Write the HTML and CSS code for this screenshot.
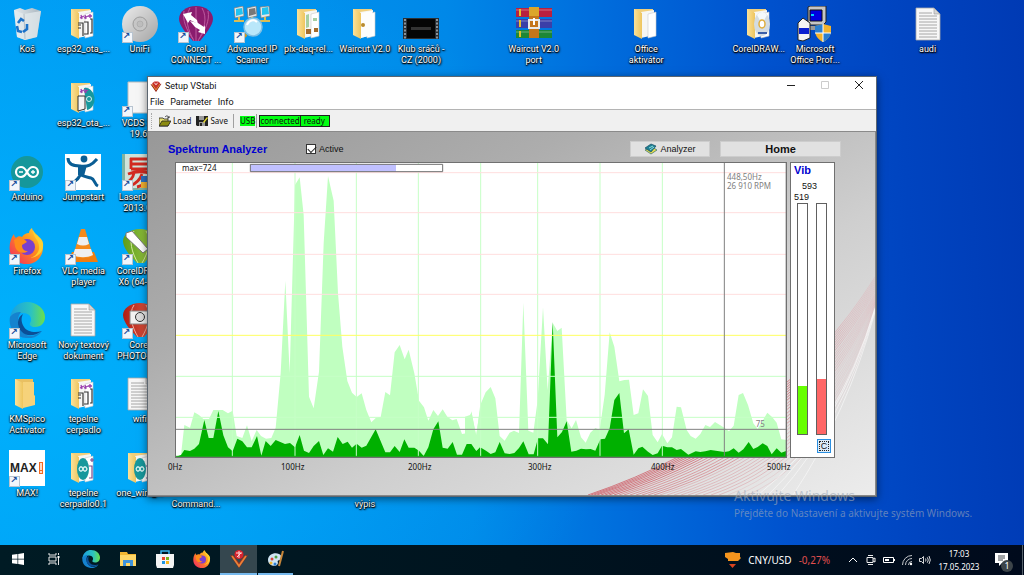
FILE: index.html
```html
<!DOCTYPE html>
<html lang="cs">
<head>
<meta charset="utf-8">
<title>Setup VStabi</title>
<link rel="stylesheet" href="styles.css">
</head>
<body>
<svg class="sprite" aria-hidden="true">
  <defs>
    <linearGradient id="g-folder" x1="0" x2="1"><stop offset="0" stop-color="#fbe29a"/><stop offset="1" stop-color="#eec55e"/></linearGradient>
    <linearGradient id="g-disc" x1="0" y1="0" x2="1" y2="1"><stop offset="0" stop-color="#ececec"/><stop offset="1" stop-color="#a4a4a4"/></linearGradient>
    <linearGradient id="g-edge" x1="0" x2="1"><stop offset="0" stop-color="#1a9fe0"/><stop offset=".6" stop-color="#2cc3c0"/><stop offset="1" stop-color="#6be04a"/></linearGradient>
    <linearGradient id="g-fox" x1="1" y1="0" x2="0" y2="1"><stop offset="0" stop-color="#ffe23a"/><stop offset=".45" stop-color="#ff8a1c"/><stop offset="1" stop-color="#f0206a"/></linearGradient>
    <linearGradient id="g-green" x1="0" x2="1"><stop offset="0" stop-color="#5d9c1c"/><stop offset="1" stop-color="#a6d04a"/></linearGradient>
    <linearGradient id="g-red" x1="0" x2="1"><stop offset="0" stop-color="#b01c14"/><stop offset="1" stop-color="#e8664c"/></linearGradient>
    <linearGradient id="g-bin" x1="0" x2="1"><stop offset="0" stop-color="#e4eaee"/><stop offset="1" stop-color="#aab6bf"/></linearGradient>
    <linearGradient id="g-wave" gradientUnits="userSpaceOnUse" x1="440" y1="0" x2="727" y2="0"><stop offset="0" stop-color="#c8323f"/><stop offset=".75" stop-color="#d04a58"/><stop offset=".9" stop-color="#e48a94" stop-opacity=".55"/><stop offset="1" stop-color="#e8a0a8" stop-opacity=".4"/></linearGradient>
  </defs>
  <symbol id="i-folder" viewBox="0 0 36 36"><path d="M6 3h18v16l2 1v9H11L6 26z" fill="#e9c062"/><path d="M6 3l8 4v26l-8-4z" fill="url(#g-folder)"/><path d="M14 6h11v13l1 1v9l-12 3z" fill="#f6d27a"/></symbol>
  <symbol id="i-papers" viewBox="0 0 36 36"><path d="M6 3h19v26H11L6 26z" fill="#f1cf7b"/><path d="M13 6l13-2v25l-13 3z" fill="#f6f6f4"/><path d="M20 8l8-2v24l-8 2z" fill="#fff" stroke="#c9c9c9" stroke-width=".6"/><path d="M6 3l8 4v26l-8-4z" fill="url(#g-folder)"/></symbol>
  <symbol id="i-code" viewBox="0 0 36 36"><use href="#i-papers"/><path d="M13 17h5v13M19 16h4v12h-4M25 13h2v14h-2M13 19h3M13 22h3" fill="none" stroke="#353535" stroke-width="1.200"/><path d="M16 9l1 4M15 12l4-2M20 9l1 4M19 12l4-2M25 8v4M23 10h4" fill="none" stroke="#9b3fae" stroke-width="1.300"/></symbol>
  <symbol id="i-folderino" viewBox="0 0 36 36"><use href="#i-papers"/><ellipse cx="18" cy="19" rx="6" ry="11" fill="#17989c"/><path d="M14 19c1-3 3-3 4 0s3 3 4 0c-1-3-3-3-4 0s-3 3-4 0" fill="none" stroke="#d9f3f2" stroke-width="1.300"/><path d="M24 16h3v12h-3M25 10h4M27 8v4" fill="none" stroke="#7b4a8e" stroke-width="1.200"/></symbol>
  <symbol id="i-foldercirc" viewBox="0 0 36 36"><use href="#i-papers"/><path d="M19 8a9 11 0 0 1 3 22z" fill="#17989c"/><circle cx="24" cy="19" r="2.500" fill="none" stroke="#d9f3f2"/><path d="M13 16h7v13l-7 2z" fill="#f5f5f5" stroke="#333"/><path d="M16 9l1 4M15 12l4-2M20 9l1 4M19 12l4-2" fill="none" stroke="#9b3fae" stroke-width="1.300"/></symbol>
  <symbol id="i-bin" viewBox="0 0 36 36"><path d="M5 4l6-2 5 2 7-2 9 3-4 26-12 3-8-3z" fill="url(#g-bin)"/><path d="M5 4l10 4 17-3-4 26-12 3-8-3z" fill="#e6ecf0" opacity=".7"/><path d="M15 8l1 25" stroke="#b4bec6"/><path d="M9 17l3-4 3 2M8 20l1 5 4 1M18 18v5l-4 3" fill="none" stroke="#1b72c9" stroke-width="2.600"/></symbol>
  <symbol id="i-disc" viewBox="0 0 36 36"><circle cx="18" cy="18" r="18" fill="url(#g-disc)"/><circle cx="18" cy="18" r="7" fill="#c6c6c6" stroke="#9c9c9c"/><circle cx="18" cy="18" r="3" fill="#bdbdbd" stroke="#a5a5a5" stroke-width=".6"/></symbol>
  <symbol id="i-connect" viewBox="0 0 36 36"><path d="M18 0c10 0 17 6 17 13 0 6-8 16-13 22h-7C9 29 1 19 1 13 1 6 8 0 18 0z" fill="#8a1c6e"/><path d="M12 2C6 12 10 24 16 35M18 1v34M24 2c6 10 2 22-4 33M6 5c-2 9 3 20 9 28M30 5c2 9-3 20-9 28" fill="none" stroke="#bd5a9f"/><path d="M5 8l9-2-1 3 6 5 1 4-8-4-2 3z" fill="#fff"/><path d="M12 15l8 2 6 4 1-2 0 9-7-2 2-2-5-3z" fill="#fff"/></symbol>
  <symbol id="i-ip" viewBox="0 0 36 36"><g fill="#e2e6e8" stroke="#777" stroke-width=".7"><path d="M0 2l9-2 1 10-9 2zM13 2l9-2 1 10-9 2zM26 1l9-1 1 10-9 2z"/></g><path d="M2 3l6-1 1 6-7 2zM28 2l6-1 1 7-7 1z" fill="#22c3f0"/><path d="M15 3l6-1 1 6-7 2z" fill="#777"/><path d="M0 15h10M13 15h10M26 15h10M5 11v4M18 11v4M31 11v4" stroke="#d9bc55" stroke-width="2"/><path d="M12 28l-6 6" stroke="#d19a1e" stroke-width="4"/><circle cx="19" cy="21" r="9" fill="#b9e7fa" stroke="#7fc0e4" stroke-width="1.500"/><path d="M13 19c2-5 7-6 10-3" stroke="#fff" stroke-width="2" fill="none"/></symbol>
  <symbol id="i-daq" viewBox="0 0 36 36"><use href="#i-papers"/><path d="M15 9l3-1v13l-3 1zM22 12h4v3h-4z" fill="#a6cfa2"/><path d="M15 23h5v5h-5zM23 22h4v4h-4z" fill="#a26b2d"/></symbol>
  <symbol id="i-air" viewBox="0 0 36 36"><use href="#i-papers"/><path d="M14 7l11-2v24l-11 3z" fill="#fdfdfd"/><circle cx="16" cy="19" r="2" fill="#b98b2f"/></symbol>
  <symbol id="i-video" viewBox="0 0 36 36"><path d="M0 12h36v21H0z" fill="#2b3035"/><path d="M4 13h28v19H4z" fill="#050505"/><path d="M2 13v20M34 13v20" stroke="#8b949c" stroke-width="2" stroke-dasharray="2 1.500"/><path d="M8 21h20v3H8z" fill="#333"/></symbol>
  <symbol id="i-rar" viewBox="0 0 36 36"><path d="M0 2h36v9H0z" fill="#b9203f"/><path d="M0 13h36v9H0z" fill="#3b3fa8"/><path d="M0 24h36v8H0z" fill="#1d8735"/><path d="M0 4h36M0 15h36M0 26h36" stroke="#fff" opacity=".35"/><path d="M4 3v7M4 14v7M4 25v6" stroke="#e6c02a" stroke-width="2"/><path d="M13 1h10v31H13z" fill="#c4761c"/><path d="M13 1h10v9H13z" fill="#dba62b"/><path d="M13 14h10v8H13z" fill="none" stroke="#e9e9e9" stroke-width="2"/><path d="M18 12v7" stroke="#fff" stroke-width="2"/></symbol>
  <symbol id="i-cd" viewBox="0 0 36 36"><use href="#i-papers"/><ellipse cx="21" cy="18" rx="8" ry="12" fill="#d3dce2"/><path d="M21 18l-5-9c3-4 7-4 10 0z" fill="#f5fafc"/><ellipse cx="21" cy="18" rx="3" ry="4" fill="#fff" stroke="#e0ae3c" stroke-width="1.500"/><path d="M17 27h9" stroke="#3b5fa8" stroke-width="2"/></symbol>
  <symbol id="i-setup" viewBox="0 0 36 36"><path d="M11 1l2-1h16v16l-3 3H11z" fill="#c6c6c6" stroke="#222"/><path d="M13 4h12v11H13z" fill="#0000e0" stroke="#111"/><path d="M14 8h3v2h-3z" fill="#00d0ff"/><path d="M12 20h17v4H12z" fill="#999"/><path d="M1 17l5-5 7 5v15l-7 3-5-1z" fill="#f4f4f4" stroke="#222"/><path d="M2 22h10v6H2z" fill="#0a1fd0"/><path d="M18 20l8-2 8 2v5c0 5-4 9-8 11-4-2-8-6-8-11z" fill="#f3b32c"/><path d="M18 20l8-2v9h-8zM26 27h8c-1 4-4 7-8 9z" fill="#2b7fd0"/><path d="M26 18v18M18 27h16" stroke="#fff"/></symbol>
  <symbol id="i-doc" viewBox="0 0 36 36"><path d="M6 2h18l6 6v26H6z" fill="#f7f7f7" stroke="#a8a8a8" stroke-width=".8"/><path d="M24 2v6h6z" fill="#d5d5d5" stroke="#999" stroke-width=".6"/><path d="M9 7h13M9 10h18M9 13h18M9 16h18M9 19h18M9 22h18M9 25h18M9 28h18M9 31h18" stroke="#a6a6a6" stroke-width="1"/></symbol>
  <symbol id="i-blank" viewBox="0 0 36 36"><path d="M6 2h25v31H6z" fill="#f6f6f6" stroke="#bbb"/></symbol>
  <symbol id="i-arduino" viewBox="0 0 36 36"><circle cx="18" cy="18" r="16" fill="#15979b"/><path d="M18 18c-2-4-4-5-6-5a5 5 0 0 0 0 10c2 0 4-1 6-5s4-5 6-5a5 5 0 0 1 0 10c-2 0-4-1-6-5z" fill="none" stroke="#fff" stroke-width="2.200"/><path d="M10 18h4M22 18h4M24 16v4" stroke="#fff" stroke-width="1.300"/></symbol>
  <symbol id="i-jump" viewBox="0 0 36 36"><path d="M0 0h36v36H0z" fill="#fff"/><circle cx="19" cy="5" r="3.400" fill="#0a5d94"/><path d="M3 4c0 6 5 8 12 8 8 1 12-1 17-7M17 12c0 5 0 8-3 11-2 4-6 4-10 11M16 21c4 2 7 2 10 3 4 1 3 6 7 8" fill="none" stroke="#0a5d94" stroke-width="3"/><path d="M13 11h9l-3 11-6-1z" fill="#0a5d94"/></symbol>
  <symbol id="i-laser" viewBox="0 0 36 36"><path d="M0 0h36v36H0z" fill="#7fb3a2"/><path d="M3 0h33v34H3z" fill="#cfe3da"/><path d="M8 5h20M9 10h18M9 15h18M6 20c8-3 16-3 24 0M12 19c-1 5-4 8-8 10M20 20c-2 6-7 10-12 12M28 20c-1 7-7 12-13 13M9 4v11" stroke="#d22a20" stroke-width="2.800" fill="none"/><path d="M19 22h14v12H19z" fill="#f0b030"/><path d="M19 22h7v6h-7zM26 28h7v6h-7z" fill="#2b6fc0"/></symbol>
  <symbol id="i-fox" viewBox="0 0 36 36"><path d="M20 5c0-3 2-4 3-5 1 5 5 6 7 9 7 9 4 20-4 25-9 5-20 1-24-7C-1 20 1 11 5 6c0 2 1 3 2 4 2-2 4-2 6-1 2-3 4-4 7-4z" fill="url(#g-fox)"/><circle cx="18" cy="19" r="8" fill="#7a3fd0"/><path d="M5 12c5-3 9-3 13 2l-5 3c0 4 2 6 6 6-5 4-12 1-13-5z" fill="#ff8c1a"/><path d="M24 2c0 9 7 9 6 19-1 5-5 8-9 9 9-1 14-7 13-15-1-6-7-6-10-13z" fill="#ffcf2e"/></symbol>
  <symbol id="i-vlc" viewBox="0 0 36 36"><path d="M7 24h22l4 10H3z" fill="#ef7d10"/><path d="M16 1h4l8 27c-6 3-14 3-20 0z" fill="#f58a1a"/><path d="M14 9h8l2 7c-4 2-8 2-12 0zM10 21h16l2 6c-6 3-14 3-20 0z" fill="#efefef"/></symbol>
  <symbol id="i-draw" viewBox="0 0 36 36"><path d="M18 1c10 0 17 6 17 12 0 7-7 16-13 22h-7C9 29 1 20 1 13 1 7 8 1 18 1z" fill="url(#g-green)"/><path d="M12 3c-6 9-2 22 4 32M24 3c6 9 2 22-4 32" fill="none" stroke="#d5ec9e"/><path d="M4 5l6-2 16 18-5 4L4 9z" fill="#fff" stroke="#777"/></symbol>
  <symbol id="i-photo" viewBox="0 0 36 36"><path d="M18 1c10 0 17 6 17 12 0 7-7 16-13 22h-7C9 29 1 20 1 13 1 7 8 1 18 1z" fill="url(#g-red)"/><path d="M12 3c-6 9-2 22 4 32M24 3c6 9 2 22-4 32" fill="none" stroke="#f4b0a0"/><path d="M8 9h22v13H8z" fill="#f2f2f2" stroke="#888"/><circle cx="18" cy="15" r="4.500" fill="#ddd" stroke="#333"/></symbol>
  <symbol id="i-edge" viewBox="0 0 36 36"><path d="M1 15C3 5 10 0 18 0c10 0 18 7 18 15 0 6-4 10-10 10-4 0-6-2-5-4 3-4 0-10-7-10C8 11 3 13 1 18z" fill="url(#g-edge)"/><path d="M1 15c3-4 7-5 11-5-5 6-4 17 4 22 6 4 12 1 17-3-3 5-9 8-16 7C6 35-1 26 1 15z" fill="#1583cf"/><path d="M14 12c-6 3-7 12-1 18 5 5 13 4 20-1-7 2-15 1-18-4-3-5-3-9-1-13z" fill="#0b4f97"/></symbol>
  <symbol id="i-gem" viewBox="0 0 20 20"><path d="M3 4l4-3h7l4 3-8 15z" fill="#c9302c"/><path d="M0 6l5 1 5 7 5-7 5-2-10 15z" fill="#8c1a12"/><path d="M3 6l7 10 7-10" fill="none" stroke="#e98a3c" stroke-width="2"/><path d="M7 3l3 4 3-4" stroke="#fff" stroke-width="1.500" fill="none"/></symbol>
</svg>

<main class="desktop">
  <ul class="icons">
    <li class="c1 r1"><a href="#bin"><svg><use href="#i-bin"/></svg><span>Koš</span></a></li>
    <li class="c2 r1"><a href="#esp1"><svg><use href="#i-code"/></svg><span>esp32_ota_...</span></a></li>
    <li class="c3 r1 link"><a href="#unifi"><svg><use href="#i-disc"/></svg><span>UniFi</span></a></li>
    <li class="c4 r1 link"><a href="#connect"><svg><use href="#i-connect"/></svg><span>Corel<br>CONNECT ...</span></a></li>
    <li class="c5 r1 link"><a href="#ip"><svg><use href="#i-ip"/></svg><span>Advanced IP<br>Scanner</span></a></li>
    <li class="c6 r1"><a href="#plx"><svg><use href="#i-daq"/></svg><span>plx-daq-rel...</span></a></li>
    <li class="c7 r1"><a href="#waircut"><svg><use href="#i-air"/></svg><span>Waircut V2.0</span></a></li>
    <li class="c8 r1"><a href="#klub"><svg><use href="#i-video"/></svg><span>Klub sráčů -<br>CZ (2000)</span></a></li>
    <li class="c10 r1"><a href="#port"><svg><use href="#i-rar"/></svg><span>Waircut V2.0<br>port</span></a></li>
    <li class="c12 r1"><a href="#office"><svg><use href="#i-papers"/></svg><span>Office<br>aktivátor</span></a></li>
    <li class="c14 r1"><a href="#corel"><svg><use href="#i-cd"/></svg><span>CorelDRAW...</span></a></li>
    <li class="c15 r1"><a href="#setup"><svg><use href="#i-setup"/></svg><span>Microsoft<br>Office Prof...</span></a></li>
    <li class="c17 r1"><a href="#audi"><svg><use href="#i-doc"/></svg><span>audi</span></a></li>
    <li class="c2 r2"><a href="#esp2"><svg><use href="#i-foldercirc"/></svg><span>esp32_ota_...</span></a></li>
    <li class="c3 r2 link"><a href="#vcds"><svg><use href="#i-blank"/></svg><span>VCDS SK<br>19.6.</span></a></li>
    <li class="c1 r3 link"><a href="#arduino"><svg><use href="#i-arduino"/></svg><span>Arduino</span></a></li>
    <li class="c2 r3 link"><a href="#jump"><svg><use href="#i-jump"/></svg><span>Jumpstart</span></a></li>
    <li class="c3 r3 link"><a href="#laser"><svg><use href="#i-laser"/></svg><span>LaserDRW<br>2013.02</span></a></li>
    <li class="c1 r4 link"><a href="#firefox"><svg><use href="#i-fox"/></svg><span>Firefox</span></a></li>
    <li class="c2 r4 link"><a href="#vlc"><svg><use href="#i-vlc"/></svg><span>VLC media<br>player</span></a></li>
    <li class="c3 r4 link"><a href="#draw"><svg><use href="#i-draw"/></svg><span>CorelDRAW<br>X6 (64-Bit)</span></a></li>
    <li class="c1 r5 link"><a href="#edge"><svg><use href="#i-edge"/></svg><span>Microsoft<br>Edge</span></a></li>
    <li class="c2 r5"><a href="#doc"><svg><use href="#i-doc"/></svg><span>Nový textový<br>dokument</span></a></li>
    <li class="c3 r5 link"><a href="#photo"><svg><use href="#i-photo"/></svg><span>Corel<br>PHOTO-PAI</span></a></li>
    <li class="c1 r6"><a href="#kms"><svg><use href="#i-folder"/></svg><span>KMSpico<br>Activator</span></a></li>
    <li class="c2 r6"><a href="#tep"><svg><use href="#i-code"/></svg><span>tepelne<br>cerpadlo</span></a></li>
    <li class="c3 r6"><a href="#wifi"><svg><use href="#i-doc"/></svg><span>wifi</span></a></li>
    <li class="c1 r7 link"><a href="#max"><svg viewBox="0 0 36 36"><path d="M0 0h36v36H0z" fill="#fff"/><path d="M30 12h4v12h-4z" fill="#f26a21"/><path d="M32 13v7M32 21v2" stroke="#fff" stroke-width="1.500"/><text x="1" y="22" class="max-logo">MAX</text></svg><span>MAX!</span></a></li>
    <li class="c2 r7"><a href="#tep01"><svg><use href="#i-folderino"/></svg><span>tepelne<br>cerpadlo0.1</span></a></li>
    <li class="c3 r7"><a href="#wire"><svg><use href="#i-folderino"/></svg><span>one_wire_...</span></a></li>
    <li class="c4 r7"><a href="#cmd"><svg></svg><span><br>Command...</span></a></li>
    <li class="c7 r7"><a href="#vypis"><svg></svg><span><br>výpis</span></a></li>
  </ul>

  <section class="window" aria-label="Setup VStabi">
    <header class="titlebar">
      <svg class="app-icon"><use href="#i-gem"/></svg>
      <h1>Setup VStabi</h1>
      <button aria-label="Minimize"><svg viewBox="0 0 8 8"><path d="M0 4.500h8" stroke="#222"/></svg></button>
      <button aria-label="Maximize" disabled><svg viewBox="0 0 8 8"><path d="M.5.5h7v7h-7z" fill="none" stroke="#ccc"/></svg></button>
      <button aria-label="Close"><svg viewBox="0 0 8 8"><path d="M0 0l8 8M8 0L0 8" stroke="#222"/></svg></button>
    </header>
    <nav class="menu"><button>File</button><button>Parameter</button><button>Info</button></nav>
    <div class="toolbar">
      <i class="grip"></i>
      <button><svg class="tool-icon" viewBox="0 0 12 12"><path d="M0 3h4l1 1h4v7H0z" fill="#e8e070" stroke="#222" stroke-width=".8"/><path d="M0 11l3-5h9l-3 5z" fill="#8b8b10" stroke="#222" stroke-width=".8"/><path d="M6 2c2-2 3-1 4 1M10 1v2H8" fill="none" stroke="#222" stroke-width=".8"/></svg>Load</button>
      <button><svg class="tool-icon" viewBox="0 0 12 12"><path d="M0 1h12v10H1l-1-1z" fill="#222"/><path d="M3 1h5v4H3zM3 7h6v4H3z" fill="#9a9a9a"/><path d="M4 8h2v3H4z" fill="#222"/><path d="M7 7l4-5 1 1-4 5z" fill="#e6d92b"/></svg>Save</button>
      <i class="sep"></i>
      <span class="usb">USB</span>
      <i class="sep near"></i>
      <span class="state">connected</span><span class="state ready">ready</span>
    </div>
    <div class="panel">
      <svg class="waves" viewBox="0 0 727 363" preserveAspectRatio="none" aria-hidden="true">
        <g fill="none" stroke="url(#g-wave)">
          <g opacity=".6"><path d="M440 363Q632 298 727 145M443 363Q634 299 727 147M446 363Q636 300 727 149M449 363Q638 301 727 151M453 363Q640 302 727 153M457 363Q642 303 727 155M461 363Q644 304 727 157M466 363Q646 305 727 159"/></g>
          <g opacity=".42"><path d="M471 363Q649 306 727 161M476 363Q652 307 727 162M482 363Q655 308 727 163M488 363Q658 310 727 164M494 363Q661 311 727 165M500 363Q664 312 727 166M506 363Q667 313 727 167"/></g>
          <g opacity=".24"><path d="M512 363Q670 314 727 168M519 363Q673 315 727 168M526 363Q676 316 727 169M533 363Q679 317 727 169M540 363Q681 318 727 170M547 363Q683 319 727 170M555 363Q685 320 727 171M563 363Q687 320 727 171M571 363Q689 320 727 172"/></g>
          <g opacity=".12"><path d="M580 363Q690 320 727 172M590 363Q692 320 727 173M600 363Q694 320 727 173"/></g>
        </g>
        <path d="M610 363Q690 300 727 176M620 363Q692 295 727 177M630 363Q696 290 727 178M645 363Q700 280 727 180" fill="none" stroke="#fff" opacity=".5"/>
      </svg>
      <div class="head">
        <h2>Spektrum Analyzer</h2>
        <label class="active"><input type="checkbox" checked>Active</label>
        <button class="btn analyzer"><svg viewBox="0 0 14 12"><path d="M1 7l7-3 5 3-6 4z" fill="#e5dc50" stroke="#2f6d68" stroke-width=".7"/><path d="M1 5l6-4 5 2-5 6z" fill="#1e7f93" stroke="#174f66" stroke-width=".7"/><path d="M5 5l4-2M6 7l4-3" stroke="#8fe0df"/></svg>Analyzer</button>
        <button class="btn home">Home</button>
      </div>
      <div class="body">
        <div class="plot-col">
          <svg class="plot" viewBox="0 0 1836 888" role="img" aria-label="Spektrum">
            <path d="M0 0h1836v888H0z" fill="#fff"/>
            <g fill="#c0ffc0">
              <path transform="translate(-45 -6)" d="M48 890L63 885 73 795 90 803 103 757 117 765 130 777 147 777 160 750 188 750 204 760 218 752 230 828 247 834 261 796 275 843 290 810 303 828 318 836 334 834 347 803 362 640 376 362 389 640 405 75 419 52 431 165 447 710 461 745 477 635 491 250 504 48 521 122 534 400 547 560 562 663 576 698 590 711 605 700 619 750 634 787 648 773 662 771 676 696 690 706 704 577 719 555 734 598 746 569 763 640 777 722 792 742 805 782 820 750 834 768 848 748 862 770 877 781 890 777 906 822 920 820 934 754 949 828 960 740V890z"/>
              <path transform="translate(885 354)" d="M-15 530V410L0 405 5 398 18 468 33 370 47 337 62 321 76 355 89 468 104 482 119 458 132 452 147 459 160 68 175 452 190 458 203 360 219 82 233 330 248 128 262 153 275 143 290 420 305 445 318 420 333 472 347 488 361 458 376 444 389 450 404 345 419 157 433 200 448 304 463 300 477 299 491 405 505 400 519 328 534 348 548 465 563 487 576 462 592 490 606 472 620 380 633 382 650 450 662 468 677 476 691 462 706 435 720 441 735 426 763 443 777 454 791 437 806 345 819 339 834 375 850 430 863 447 892 398 907 412 920 428 934 478 950 480V530z"/>
            </g>
            <g fill="#00b000">
              <path transform="translate(-45 -6)" d="M48 890L63 885 73 870 90 873 103 866 117 852 133 780 146 834 160 834 175 753 190 826 204 862 218 874 232 836 247 844 261 862 275 862 291 828 304 887 317 843 332 858 347 840 375 852 390 849 405 862 419 825 432 872 447 879 461 858 477 843 490 885 504 865 519 875 533 831 548 852 563 845 576 863 590 851 605 863 619 857 647 808 676 877 690 877 704 858 719 876 733 838 746 863 763 863 777 872 791 888 805 862 820 808 835 784 848 863 863 866 878 846 891 884 906 884 920 852 934 852 949 874 960 862V890z"/>
              <path transform="translate(885 354)" d="M-15 530V505L0 492 18 514 33 503 48 512 62 522 76 517 89 486 104 520 119 522 133 519 147 504 160 484 176 523 191 523 204 475 219 475 234 493 248 125 262 472 276 456 290 424 304 515 319 512 333 506 348 508 362 507 376 512 391 478 405 476 419 445 433 360 448 339 462 460 476 448 491 524 505 505 517 500 534 515 548 525 563 520 576 497 592 502 606 502 620 510 633 507 655 524 677 514 691 516 706 514 722 510 763 516 777 514 791 505 806 518 820 508 836 486 850 507 863 501 878 490 892 498 905 523 920 505 934 518 950 512V530z"/>
            </g>
            <g fill="none" stroke-width="3">
              <path d="M172 0v884M360 0v884M544 0v884M730 0v884M917 0v884M1088 0v884M1275 0v884M1462 0v884M0 643h1836M0 766h1836" stroke="#c6ffc6"/>
              <path d="M0 32h1836M0 152h1836M0 277h1836M0 397h1836" stroke="#ffdede"/>
              <path d="M0 520h1836" stroke="#ffff60"/>
              <path d="M0 802h1836M1648 0v884" stroke="#808080"/>
            </g>
            <path d="M0 883h1836" stroke="#00b000" stroke-width="3"/>
            <path d="M226 7h577v22H226z" fill="#fff"/>
            <path d="M226 7h437v22H226z" fill="#c0c0ff"/>
            <path d="M226 7h577v22H226z" fill="none" stroke="#707070" stroke-width="3"/>
            <path d="M1834 0v886H1V1h1835" fill="none" stroke="#707070" stroke-width="4"/>
            <text x="21" y="26" fill="#111">max=724</text>
            <g fill="#808080"><text x="1656" y="54">448,50Hz</text><text x="1656" y="81">26 910 RPM</text><text x="1742" y="794">75</text></g>
          </svg>
          <div class="axis"><span>0Hz</span><span>100Hz</span><span>200Hz</span><span>300Hz</span><span>400Hz</span><span>500Hz</span></div>
        </div>
        <aside class="vib">
          <h3>Vib</h3>
          <output class="peak">593</output>
          <output class="now">519</output>
          <div class="bars">
            <div class="bar"><i class="lime" style="height:21%"></i></div>
            <div class="bar"><i class="coral" style="height:24%"></i></div>
          </div>
          <button class="clear">C</button>
        </aside>
      </div>
    </div>
  </section>

  <div class="watermark"><p class="wm-title">Aktivujte Windows</p><p>Přejděte do Nastavení a aktivujte systém Windows.</p></div>
</main>

<footer class="taskbar">
  <button class="task first" aria-label="Start"><svg viewBox="0 0 12 12"><path d="M0 1.700L5.500 1v4.700H0zM6.200.9L12 0v5.700H6.200zM0 6.400h5.500V11L0 10.300zM6.200 6.400H12V12l-5.800-.9z" fill="#fff"/></svg></button>
  <button class="task" aria-label="Task view"><svg viewBox="0 0 12 12"><path d="M1 0v2h7V0M1 12v-2h7v2M1 4h7v4H1zM10.500 0v2M10.500 5v7" fill="none" stroke="#e8e8e8"/><path d="M9.500 3h2v2h-2z" fill="#fff"/></svg></button>
  <button class="task big" aria-label="Edge"><svg><use href="#i-edge"/></svg></button>
  <button class="task big" aria-label="Explorer"><svg viewBox="0 0 18 18"><path d="M1 2h7l1 2h8v12H1z" fill="#f2b632"/><path d="M1 5h16v11H1z" fill="#ffd767"/><path d="M4 16v-6h10v6h-3v-3H7v3z" fill="#3f93dc"/></svg></button>
  <button class="task big" aria-label="Store"><svg viewBox="0 0 18 18"><path d="M5 4V1h8v3" fill="none" stroke="#38b6ee" stroke-width="1.500"/><path d="M0 4h18v11l-1 3H1l-1-3z" fill="#f4f4f4"/><path d="M6 7h3v3H6z" fill="#e8452c"/><path d="M10 7h3v3h-3z" fill="#7ab51d"/><path d="M6 11h3v3H6z" fill="#1f94e0"/><path d="M10 11h3v3h-3z" fill="#f5b51b"/></svg></button>
  <button class="task big" aria-label="Firefox"><svg><use href="#i-fox"/></svg></button>
  <button class="task big current" aria-label="Setup VStabi"><svg viewBox="0 0 18 18"><path d="M0 5l4 1 5 7 5-7 4-1-9 13z" fill="#a5301a"/><path d="M2 6l7 10 7-10" fill="none" stroke="#e8853a" stroke-width="1.600"/><circle cx="9" cy="4.500" r="4.500" fill="#d8232e"/><path d="M6 3h6M9 1v7M7 7l4-4" stroke="#ffd7d7"/></svg></button>
  <button class="task big open" aria-label="Paint"><svg viewBox="0 0 18 18"><path d="M1 10c0-5 6-8 11-6 4 2 3 5 1 6-2 0-3 1-2 3-1 5-10 3-10-3z" fill="#cfe4f2"/><circle cx="5" cy="9" r="1.500" fill="#d8433a"/><circle cx="9" cy="7" r="1.500" fill="#4da144"/><circle cx="4" cy="13" r="1.500" fill="#f0b52c"/><circle cx="8" cy="14" r="1.500" fill="#2f7fd0"/><path d="M16 1l-4 15" stroke="#c8873a" stroke-width="2"/></svg></button>
  <button class="news"><svg viewBox="0 0 17 18"><path d="M1 2l8-1 3 1h4v4l1 1-3 3H4V8L1 6z" fill="#f5951e"/><path d="M5 13h7l-3.500 4z" fill="#d8431f"/></svg><span>CNY/USD</span><span class="down">-0,27%</span></button>
  <div class="tray">
    <button aria-label="Show hidden icons"><svg viewBox="0 0 12 12"><path d="M2 8l4-4 4 4" fill="none" stroke="#fff"/></svg></button>
    <button aria-label="Meet now"><svg viewBox="0 0 12 12"><path d="M2 3.500h6v5H2zM8 5l2-1v4L8 7M3 1.500h5M3 10.500h5" fill="none" stroke="#eee"/></svg></button>
    <button aria-label="Battery"><svg viewBox="0 0 12 12"><path d="M.5 3.500h10v5H.5z" fill="none" stroke="#fff"/><path d="M2 5h4v2H2zM11 5h1v2h-1z" fill="#fff"/></svg></button>
    <button aria-label="Network"><svg viewBox="0 0 12 12"><path d="M1.500 11A9.500 9.500 0 0 1 11 1.500M4.500 11A6.500 6.500 0 0 1 11 4.500M7.500 11A3.500 3.500 0 0 1 11 7.500" fill="none" stroke="#c6c9cc"/><circle cx="10" cy="10" r="1.200" fill="#fff"/></svg></button>
    <button aria-label="Volume"><svg viewBox="0 0 12 12"><path d="M.5 4.500h2l2-2v7l-2-2h-2zM6.500 4.500q1 1.500 0 3M8.300 3.300q2 2.700 0 5.400M10 2q2.600 4 0 8" fill="none" stroke="#eee" stroke-width=".9"/></svg></button>
  </div>
  <time class="clock" datetime="2023-05-17T17:03">17:03<br>17.05.2023</time>
  <button class="notify" aria-label="Notifications"><svg viewBox="0 0 14 14"><path d="M0 0h13v10H7l-3 3v-3H0z" fill="#fff"/><path d="M3 3h7M3 5h7M3 7h5" stroke="#111a22" stroke-width=".8"/></svg><span class="badge">1</span></button>
</footer>
</body>
</html>
```
FILE: styles.css
```css
* { box-sizing: border-box; }
html, body { height: 100%; }
body {
  margin: 0;
  display: flex;
  flex-direction: column;
  overflow: hidden;
  font: 9px/11px Roboto, "Noto Sans", sans-serif;
}
h1, h2, h3, p, ul { margin: 0; padding: 0; }
button { margin: 0; padding: 0; border: 0; background: none; font: inherit; color: inherit; }
.sprite { position: absolute; width: 0; height: 0; }
.max-logo { font: 800 12px "Liberation Sans", sans-serif; fill: #222; text-shadow: none; }

.desktop {
  position: relative;
  flex: 1;
  min-height: 0;
  overflow: hidden;
  background:
    radial-gradient(ellipse 62% 80% at 0 65%, rgba(0, 184, 255, .75), rgba(0, 184, 255, 0)),
    linear-gradient(87deg, #009cf4 0%, #0096f0 22%, #0088e8 45%, #006cdc 60%, #0052ce 75%, #0044c0 88%, #003ab4 100%);
}
.icons {
  display: grid;
  grid-template-columns: repeat(18, minmax(0, 1fr));
  grid-auto-rows: 74px;
  margin-left: -1px;
  padding: 6px 12px 0 0;
  list-style: none;
}
.icons li { position: relative; display: flex; justify-content: center; }
.icons a {
  display: flex;
  flex-direction: column;
  align-items: center;
  gap: 2px;
  color: #fff;
  text-decoration: none;
  text-align: center;
  white-space: nowrap;
  text-shadow: 0 1px 1px #000, 0 0 2px #000, 1px 1px 2px #000;
}
.icons svg { flex: none; width: 36px; height: 36px; }
.link::after {
  content: "↗";
  position: absolute;
  left: 10px;
  top: 26px;
  width: 9px;
  height: 9px;
  background: #f2f6fb;
  border: 1px solid #b8c4d0;
  color: #1b4f9c;
  font: bold 9px/7px "DejaVu Sans", sans-serif;
}
.c1 { grid-column: 1; } .c2 { grid-column: 2; } .c3 { grid-column: 3; } .c4 { grid-column: 4; }
.c5 { grid-column: 5; } .c6 { grid-column: 6; } .c7 { grid-column: 7; } .c8 { grid-column: 8; }
.c10 { grid-column: 10; } .c12 { grid-column: 12; } .c14 { grid-column: 14; } .c15 { grid-column: 15; }
.c17 { grid-column: 17; }
.r1 { grid-row: 1; } .r2 { grid-row: 2; } .r3 { grid-row: 3; } .r4 { grid-row: 4; }
.r5 { grid-row: 5; } .r6 { grid-row: 6; } .r7 { grid-row: 7; }

.window {
  position: absolute;
  left: 147px;
  right: 147px;
  top: 76px;
  border: 1px solid #5c6670;
  background: #fff;
  box-shadow: 0 2px 8px rgba(0, 0, 0, .5);
  color: #111;
}
.titlebar { display: flex; align-items: center; height: 18px; padding-left: 2px; }
.app-icon { width: 12px; height: 11px; margin-right: 3px; }
.titlebar h1 { flex: 1; font-size: 9px; font-weight: 400; }
.titlebar button { width: 34px; height: 18px; }
.titlebar button svg { width: 8px; height: 8px; }
.menu { display: flex; align-items: flex-end; gap: 6px; height: 14px; padding: 0 0 1px 2px; }
.toolbar {
  display: flex;
  align-items: center;
  height: 23px;
  padding-left: 3px;
  border-top: 1px solid #b4b4b4;
  border-bottom: 1px solid #8a8a8a;
  background: #f0f0f0;
  font: 8px/10px "Noto Sans", sans-serif;
}
.toolbar button { display: flex; align-items: center; gap: 2px; margin-right: 5px; }
.tool-icon { width: 12px; height: 12px; }
.grip { width: 1px; height: 16px; margin-right: 7px; border-left: 1px dotted #aaa; }
.sep { width: 1px; height: 14px; margin-right: 6px; background: #a0a0a0; }
.near { margin: 0 2px 0 1px; }
.usb { background: #00ff10; }
.state { border: 1px solid #222; background: #00ff10; }
.ready { margin-left: -1px; padding: 0 4px 0 3px; }

.panel {
  position: relative;
  padding: 9px 40px 0 27px;
  background: linear-gradient(152deg, #989898 0%, #adadad 30%, #cfcfcf 62%, #ececec 100%);
  border-right: 1px solid #888;
  border-bottom: 1px solid #888;
}
.waves { position: absolute; inset: 0; width: 100%; height: 100%; }
.head { position: relative; display: flex; height: 16px; margin: 0 -6px 5px -7px; font: 9px/16px "Liberation Sans", sans-serif; }
.head h2 { width: 138px; font-size: 11px; line-height: 16px; color: #0000d0; }
.active { display: flex; flex: 1; align-items: center; gap: 3px; }
.active input {
  appearance: none;
  width: 10px;
  height: 10px;
  margin: 0;
  border: 1px solid #333;
  background: #fff;
}
.active input:checked::before {
  content: "";
  display: block;
  width: 7px;
  height: 4px;
  margin: 1px 0 0 1px;
  border: solid #222;
  border-width: 0 0 1px 1px;
  rotate: -45deg;
}
.btn { display: flex; align-items: center; justify-content: center; gap: 2px; background: #e1e1e1; border: 1px solid #cdcdcd; color: #111; }
.btn svg { width: 14px; height: 12px; }
.analyzer { width: 80px; margin-right: 10px; }
.home { width: 121px; font-size: 11px; font-weight: 700; }
.body { position: relative; display: flex; align-items: flex-start; gap: 3px; }
.plot-col { flex: 1; min-width: 0; }
.plot { display: block; width: 100%; }
.plot text { font: 24px "Noto Sans", sans-serif; }
.axis {
  display: grid;
  grid-template-columns: 113fr 127fr 120fr 123fr 116fr 24fr;
  height: 37px;
  margin: 0 -4px 0 -7px;
  padding-top: 3px;
  font: 8px/11px "Noto Sans", sans-serif;
}
.vib {
  display: flex;
  flex-direction: column;
  width: 45px;
  height: 296px;
  padding: 1px 3px 4px;
  border: 1px solid #707070;
  background: #fff;
  font: 9px/11px "Liberation Sans", sans-serif;
}
.vib h3 { font-size: 11px; line-height: 12px; color: #0000d0; }
.peak { margin-top: 5px; padding-left: 8px; }
.bars { display: flex; flex: 1; gap: 8px; margin: 0 0 4px 3px; }
.bar { display: flex; align-items: flex-end; width: 11px; border: 1px solid #606060; }
.bar i { width: 100%; }
.lime { background: #66ff00; }
.coral { background: #ff6666; }
.clear { width: 14px; height: 14px; margin: 0 0 0 23px; border: 1px solid #2b8fe0; outline: 1px dotted #222; outline-offset: -3px; background: #dcebf7; line-height: 12px; }

.watermark {
  position: absolute;
  left: 734px;
  top: 487px;
  color: rgba(160, 170, 185, .6);
  font: 10px/16px "Noto Sans", sans-serif;
  white-space: nowrap;
}
.wm-title { font-size: 14px; line-height: 18px; }

.taskbar {
  display: flex;
  flex: none;
  align-items: center;
  height: 30px;
  background: linear-gradient(90deg, #001b24, #00141f 50%, #000a1c);
  color: #fff;
  font: 10px/12px "Noto Sans", sans-serif;
}
.task { display: flex; align-items: center; justify-content: center; width: 37px; height: 30px; border-bottom: 2px solid transparent; }
.first { width: 35px; }
.task svg { width: 12px; height: 12px; }
.big svg { width: 18px; height: 18px; }
.current { background: #35474f; border-color: #76b9ed; }
.open { border-image: linear-gradient(90deg, transparent 8%, #76b9ed 8% 92%, transparent 92%) 2; }
.news { display: flex; align-items: center; gap: 7px; margin-left: auto; }
.news svg { width: 17px; height: 18px; }
.down { color: #e0504e; }
.tray { display: flex; gap: 6px; margin-left: 17px; }
.tray button { display: flex; }
.tray svg { width: 12px; height: 12px; }
.clock { width: 56px; font-size: 8px; line-height: 13px; text-align: center; }
.notify { position: relative; width: 36px; height: 30px; padding: 2px 6px 0 0; border-right: 1px solid #55606a; margin-right: 1px; }
.notify svg { width: 14px; height: 14px; }
.badge {
  position: absolute;
  right: 9px;
  bottom: 3px;
  width: 12px;
  height: 12px;
  border-radius: 6px;
  background: #3c4449;
  font-size: 9px;
  line-height: 12px;
}
```
